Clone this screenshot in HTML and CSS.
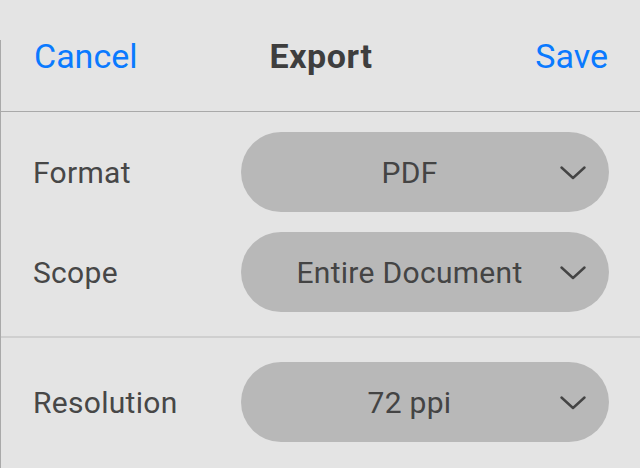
FILE: index.html
```html
<!DOCTYPE html>
<html>
<head>
	<title>Export</title>
	<meta charset="utf-8">
	<link rel="stylesheet" href="styles.css">
</head>
<body>
	<div class="sheet">
		<div class="bar">
			<a class="bar-btn">Cancel</a>
			<span class="bar-title">Export</span>
			<a class="bar-btn">Save</a>
		</div>

		<div class="group">
			<div class="row">
				<span class="label">Format</span>
				<div class="pick">
					<span class="pick-value">PDF</span>
					<svg class="chev" width="26" height="14" viewBox="0 0 26 14"><path d="M1.5 1.5 L13 12 L24.5 1.5" fill="none" stroke="#444" stroke-width="2.4" stroke-linecap="round" stroke-linejoin="round"/></svg>
				</div>
			</div>
			<div class="row">
				<span class="label">Scope</span>
				<div class="pick">
					<span class="pick-value">Entire Document</span>
					<svg class="chev" width="26" height="14" viewBox="0 0 26 14"><path d="M1.5 1.5 L13 12 L24.5 1.5" fill="none" stroke="#444" stroke-width="2.4" stroke-linecap="round" stroke-linejoin="round"/></svg>
				</div>
			</div>
		</div>

		<div class="group group-last">
			<div class="row">
				<span class="label">Resolution</span>
				<div class="pick">
					<span class="pick-value">72 ppi</span>
					<svg class="chev" width="26" height="14" viewBox="0 0 26 14"><path d="M1.5 1.5 L13 12 L24.5 1.5" fill="none" stroke="#444" stroke-width="2.4" stroke-linecap="round" stroke-linejoin="round"/></svg>
				</div>
			</div>
		</div>
	</div>
</body>
</html>
```

FILE: styles.css
```css
html, body{
	margin: 0;
	padding: 0;
	height: 100%;
	background: #e4e4e4;
	font-family: Roboto, "Liberation Sans", sans-serif;
	overflow: hidden;
}
.sheet{
	height: 468px;
	position: relative;
}
/* left edge line, starts below the status area */
.sheet::before{
	content: "";
	position: absolute;
	left: 0;
	top: 40px;
	bottom: 0;
	width: 1px;
	background: #a9a9a9;
}
.bar{
	height: 111px;
	display: flex;
	align-items: center;
	justify-content: space-between;
	padding: 0 32px 0 34px;
	border-bottom: 1px solid #a9a9a9;
	position: relative;
}
.bar-btn{
	color: #0a7aff;
	font-size: 34px;
}
.bar-title{
	position: absolute;
	left: 0;
	right: 0;
	top: 0;
	bottom: 0;
	display: flex;
	align-items: center;
	justify-content: center;
	margin-left: 2px;
	font-size: 34px;
	font-weight: bold;
	letter-spacing: 0.6px;
	color: #3e3e3e;
	pointer-events: none;
}
.group{
	display: flex;
	flex-direction: column;
	gap: 20px;
	padding: 20px 31px 24px 33px;
	border-bottom: 2px solid #cfcfcf;
}
.group-last{
	border-bottom: none;
	padding-top: 24px;
}
.row{
	display: flex;
	align-items: center;
	justify-content: space-between;
}
.label{
	font-size: 30px;
	letter-spacing: 0.3px;
	color: #474747;
	margin-top: 1px;
}
.pick{
	width: 368px;
	height: 80px;
	border-radius: 40px;
	background: #b8b8b8;
	display: flex;
	align-items: center;
	padding: 0 23px 0 0;
	box-sizing: border-box;
}
.pick-value{
	flex: 1;
	text-align: center;
	font-size: 30px;
	letter-spacing: 0.3px;
	color: #444;
	padding-left: 22px;
	margin-top: 1px;
}
.chev{
	display: block;
	margin-left: 4px;
	margin-top: 2px;
}
```
